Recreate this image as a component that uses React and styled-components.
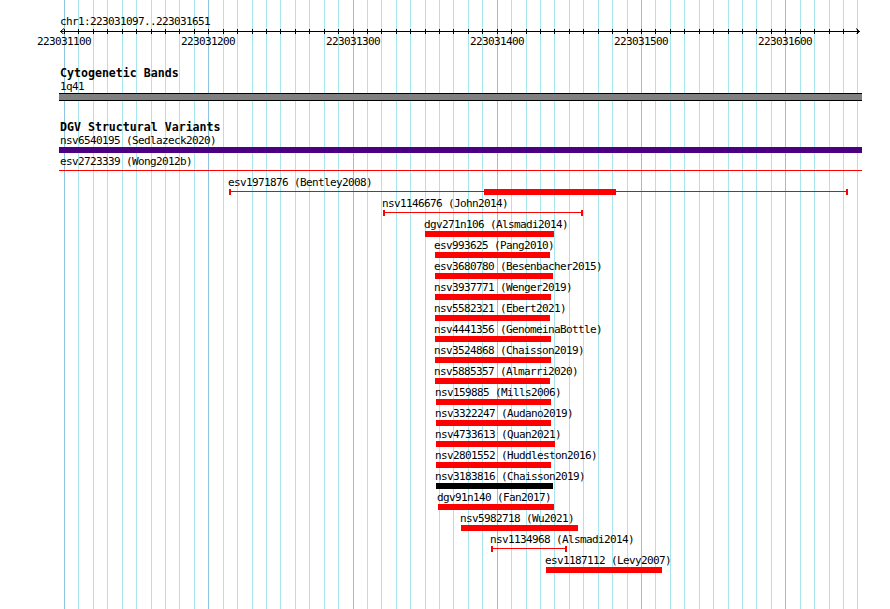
import React from "react";
import styled, { createGlobalStyle } from "styled-components";

const GlobalStyle = createGlobalStyle`
  html, body { margin: 0; padding: 0; background: #ffffff; }
  #root { width: 890px; height: 609px; }
`;

const PX0 = 64;
const STEP = 14.425;
const gridX = (k) => Math.round(PX0 + k * STEP);

const Canvas = styled.div`
  position: relative;
  width: 890px;
  height: 609px;
  overflow: hidden;
  background: #ffffff;
  font-family: "DejaVu Sans Mono", "Liberation Mono", monospace;
`;

const GridLayer = styled.svg`
  position: absolute;
  top: 0;
  left: 0;
  z-index: 0;
`;

const Panel = styled.div`
  position: relative;
  z-index: 1;
  display: flex;
  flex-direction: column;
  padding-top: 15px;
`;

const Ruler = styled.section`
  display: flex;
  flex-direction: column;
  gap: 1px;
`;

const RulerHead = styled.div`
  display: flex;
  flex-direction: column;
`;

const Track = styled.section`
  display: flex;
  flex-direction: column;
  padding-top: ${(p) => p.$pad}px;
`;

const MonoText = styled.div`
  font-size: 11px;
  letter-spacing: -0.623px;
  line-height: 13px;
  height: 13px;
  color: #000;
  white-space: nowrap;
`;

const IndentText = styled(MonoText)`
  padding-left: 60px;
`;

const AxisSvg = styled.svg`
  display: block;
`;

const ScaleRow = styled.div`
  position: relative;
  height: 13px;
`;

const ScaleLabel = styled(MonoText)`
  position: absolute;
  top: 0;
  width: 54px;
  text-align: center;
`;

const Title = styled.h3`
  margin: 0;
  padding-left: 60px;
  font-weight: bold;
  font-size: 11.6px;
  line-height: 13px;
  height: 13px;
  color: #000;
  white-space: nowrap;
`;

const BandBar = styled.div`
  margin-left: 59px;
  width: 803px;
  height: 6px;
  background: #808080;
  border-top: 1px solid #000;
  border-bottom: 1px solid #000;
`;

const FullBar = styled.div`
  margin-left: 59px;
  width: 803px;
  height: 6px;
  background: #4b0082;
`;

const FullGroup = styled.div`
  display: flex;
  flex-direction: column;
  gap: 2px;
`;

const FullLine = styled.div`
  margin-left: 59px;
  width: 803px;
  height: 1px;
  background: #ff0000;
`;

const Rows = styled.div`
  display: flex;
  flex-direction: column;
  padding-top: 5px;
`;

const Row = styled.div`
  position: relative;
  height: 21px;
`;

const FeatureLabel = styled(MonoText)`
  position: absolute;
  top: 0;
  left: ${(p) => p.$x}px;
`;

const Box = styled.div`
  position: absolute;
  top: 13px;
  left: ${(p) => p.$x}px;
  width: ${(p) => p.$w}px;
  height: 6px;
  background: ${(p) => p.$color};
`;

const Stem = styled.div`
  position: absolute;
  top: 15px;
  left: ${(p) => p.$x}px;
  width: ${(p) => p.$w}px;
  height: 1px;
  background: #ff0000;
`;

const Cap = styled.div`
  position: absolute;
  top: 13px;
  left: ${(p) => p.$x}px;
  width: 2px;
  height: 6px;
  background: #ff0000;
`;

const features = [
  { name: "esv1971876 (Bentley2008)", kind: "span", x1: 229, x2: 848, inner: [484, 616] },
  { name: "nsv1146676 (John2014)", kind: "span", x1: 383, x2: 583 },
  { name: "dgv271n106 (Alsmadi2014)", kind: "box", x1: 425, x2: 554 },
  { name: "esv993625 (Pang2010)", kind: "box", x1: 435, x2: 550 },
  { name: "esv3680780 (Besenbacher2015)", kind: "box", x1: 435, x2: 553 },
  { name: "nsv3937771 (Wenger2019)", kind: "box", x1: 435, x2: 551 },
  { name: "nsv5582321 (Ebert2021)", kind: "box", x1: 435, x2: 550 },
  { name: "nsv4441356 (GenomeinaBottle)", kind: "box", x1: 435, x2: 551 },
  { name: "nsv3524868 (Chaisson2019)", kind: "box", x1: 435, x2: 551 },
  { name: "nsv5885357 (Almarri2020)", kind: "box", x1: 435, x2: 550 },
  { name: "nsv159885 (Mills2006)", kind: "box", x1: 436, x2: 551 },
  { name: "nsv3322247 (Audano2019)", kind: "box", x1: 436, x2: 551 },
  { name: "nsv4733613 (Quan2021)", kind: "box", x1: 436, x2: 555 },
  { name: "nsv2801552 (Huddleston2016)", kind: "box", x1: 436, x2: 551 },
  { name: "nsv3183816 (Chaisson2019)", kind: "box", x1: 436, x2: 553, color: "#000000" },
  { name: "dgv91n140 (Fan2017)", kind: "box", x1: 438, x2: 554 },
  { name: "nsv5982718 (Wu2021)", kind: "box", x1: 461, x2: 578 },
  { name: "nsv1134968 (Alsmadi2014)", kind: "span", x1: 491, x2: 567 },
  { name: "esv1187112 (Levy2007)", kind: "box", x1: 546, x2: 662 },
];

const scaleLabels = [0, 10, 20, 30, 40, 50].map((k) => ({
  x: gridX(k),
  text: String(223031100 + k * 10),
}));

function Grid() {
  const lines = [];
  for (let k = 0; k <= 55; k++) {
    lines.push(
      <rect
        key={k}
        x={gridX(k)}
        y={0}
        width={1}
        height={609}
        fill={k % 10 === 0 ? "#8cc4e2" : "#a8e6ee"}
      />
    );
  }
  return (
    <GridLayer width="890" height="609" viewBox="0 0 890 609">
      {lines}
    </GridLayer>
  );
}

function Axis() {
  const ticks = [];
  for (let k = 0; k <= 55; k++) {
    ticks.push(<rect key={k} x={gridX(k)} y={1} width={1} height={5} fill="#000" />);
  }
  return (
    <AxisSvg width="890" height="6" viewBox="0 0 890 6">
      <rect x={60} y={3} width={800} height={1} fill="#000" />
      {ticks}
      <path d="M64 0.5 L60.5 3.5 L64 6.5" fill="none" stroke="#000" strokeWidth="1" />
      <path d="M856 0.5 L859.5 3.5 L856 6.5" fill="none" stroke="#000" strokeWidth="1" />
    </AxisSvg>
  );
}

function Feature({ f }) {
  const color = f.color || "#ff0000";
  return (
    <Row>
      <FeatureLabel $x={f.x1 - 1}>{f.name}</FeatureLabel>
      {f.kind === "box" ? (
        <Box $x={f.x1} $w={f.x2 - f.x1} $color={color} />
      ) : (
        <>
          <Stem $x={f.x1} $w={f.x2 - f.x1} />
          <Cap $x={f.x1} />
          <Cap $x={f.x2 - 2} />
          {f.inner && (
            <Box $x={f.inner[0]} $w={f.inner[1] - f.inner[0]} $color={color} />
          )}
        </>
      )}
    </Row>
  );
}

export default function App() {
  return (
    <>
      <GlobalStyle />
      <Canvas>
        <Grid />
        <Panel>
          <Ruler>
            <RulerHead>
              <IndentText>chr1:223031097..223031651</IndentText>
              <Axis />
            </RulerHead>
            <ScaleRow>
              {scaleLabels.map((l) => (
                <ScaleLabel key={l.text} style={{ left: l.x - 27 }}>
                  {l.text}
                </ScaleLabel>
              ))}
            </ScaleRow>
          </Ruler>

          <Track $pad={19}>
            <Title>Cytogenetic Bands</Title>
            <IndentText>1q41</IndentText>
            <BandBar />
          </Track>

          <Track $pad={20}>
            <Title>DGV Structural Variants</Title>
            <FullGroup>
              <div>
                <IndentText>nsv6540195 (Sedlazeck2020)</IndentText>
                <FullBar />
              </div>
              <IndentText>esv2723339 (Wong2012b)</IndentText>
              <FullLine />
            </FullGroup>
            <Rows>
              {features.map((f) => (
                <Feature key={f.name} f={f} />
              ))}
            </Rows>
          </Track>
        </Panel>
      </Canvas>
    </>
  );
}
